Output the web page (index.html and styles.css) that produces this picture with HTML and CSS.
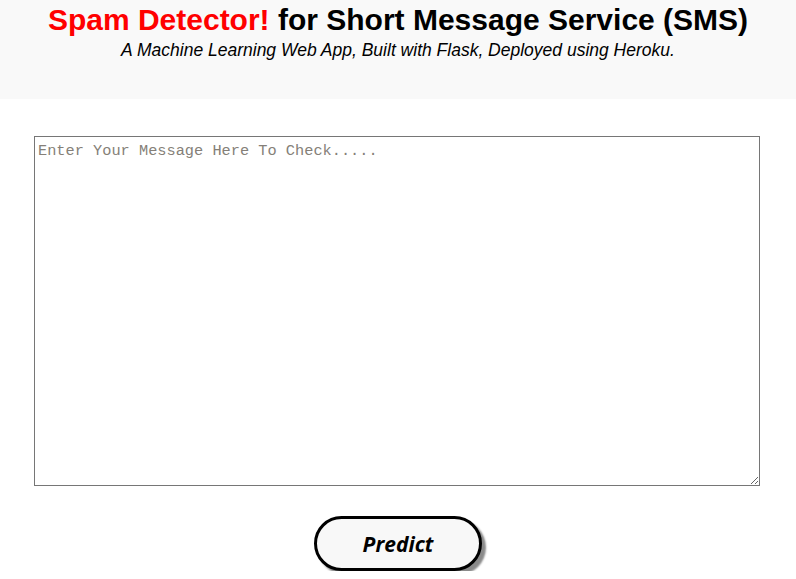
FILE: index.html
```html
<!DOCTYPE html>
<html>
<head>
<meta charset="utf-8">
<link rel="stylesheet" href="styles.css">
</head>
<body>
<header class="header">
  <h1 class="title"><span class="red">Spam Detector!</span> for Short Message Service (SMS)</h1>
  <p class="subtitle">A Machine Learning Web App, Built with Flask, Deployed using Heroku.</p>
</header>
<main class="main">
  <form class="form">
    <textarea class="message" placeholder="Enter Your Message Here To Check....."></textarea>
    <button type="button" class="predict">Predict</button>
  </form>
</main>
</body>
</html>
```
FILE: styles.css
```css
html, body {
  margin: 0;
  padding: 0;
  background: #ffffff;
}
body {
  font-family: "Liberation Sans", Arial, sans-serif;
}
.header {
  background: #f9f9f9;
  height: 99px;
  box-sizing: border-box;
  padding-top: 2px;
  text-align: center;
}
.title {
  margin: 0;
  font-size: 30px;
  font-weight: bold;
  line-height: 36px;
  color: #000;
}
.red {
  color: #ff0000;
}
.subtitle {
  margin: 0;
  font-size: 17.5px;
  font-style: italic;
  line-height: 24px;
  color: #000;
}
.main {
  padding-top: 37px;
}
.form {
  display: flex;
  flex-direction: column;
  align-items: center;
}
.message {
  width: 726px;
  height: 350px;
  box-sizing: border-box;
  margin: 0 0 0 -2px;
  border: 1px solid #767676;
  padding: 4px 3px 3px;
  font-family: "Liberation Mono", "DejaVu Sans Mono", monospace;
  font-size: 15.3px;
  line-height: 20px;
  resize: both;
}
.message::placeholder {
  color: #857f78;
}
.predict {
  margin-top: 30px;
  width: 168px;
  height: 55px;
  box-sizing: border-box;
  border: 3px solid #000;
  border-radius: 28px;
  background: #f8f8f8;
  box-shadow: 4px 4px 2px #8a8a8a;
  font-family: "Open Sans", "Liberation Sans", sans-serif;
  font-size: 21px;
  font-weight: bold;
  font-style: italic;
  color: #000;
  padding: 0;
}
```
